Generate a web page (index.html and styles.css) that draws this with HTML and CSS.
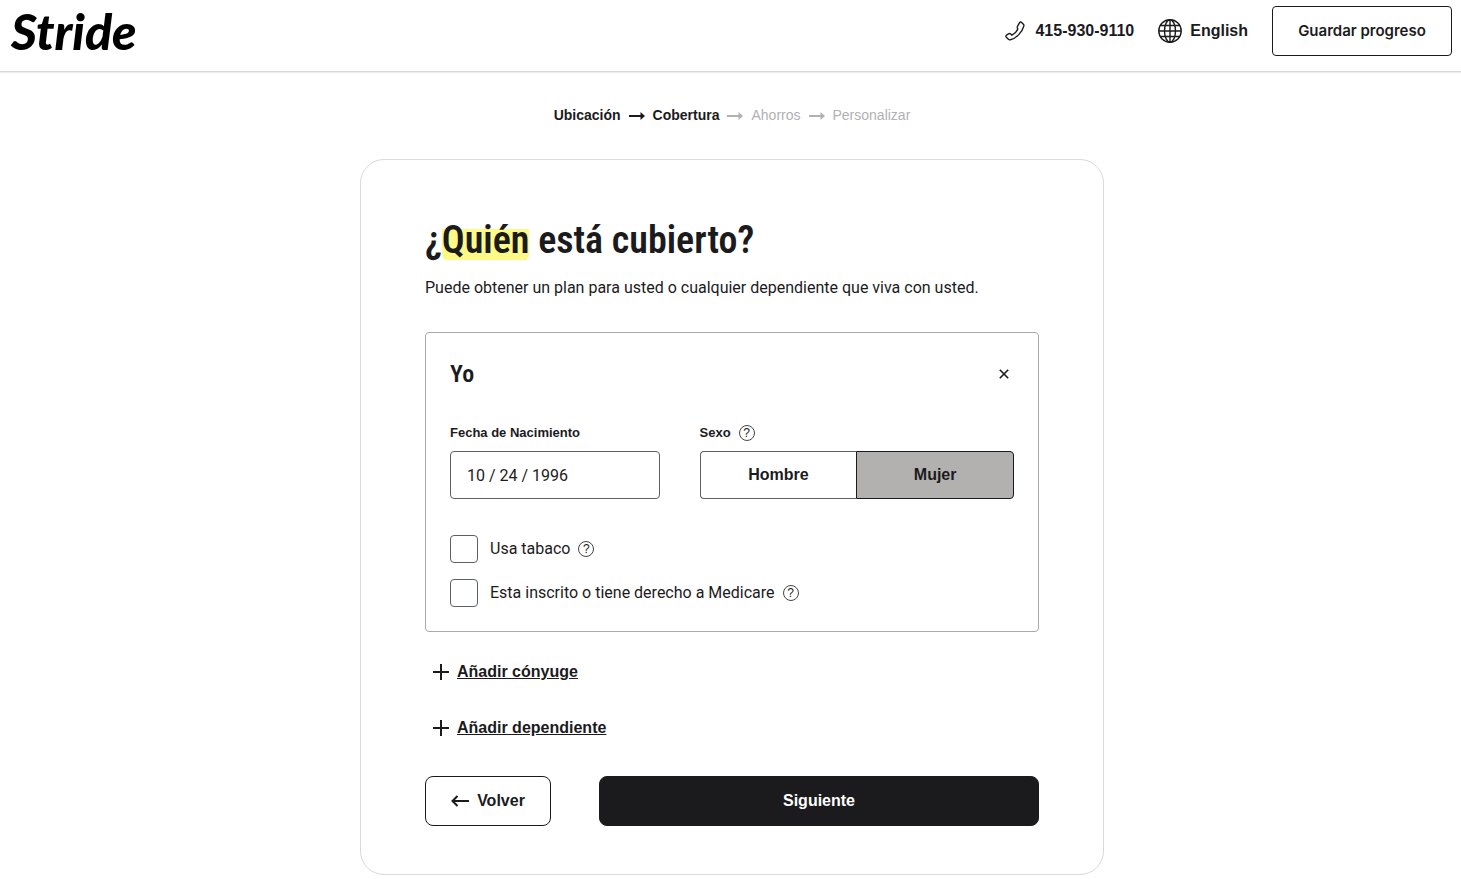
FILE: index.html
```html
<!DOCTYPE html>
<html lang="es">
<head>
<meta charset="utf-8">
<title>Stride</title>
<link rel="stylesheet" href="styles.css">
</head>
<body>

<header class="topbar">
  <a class="logo" href="#">Stride</a>
  <nav class="topbar-nav">
    <a class="nav-link phone" href="tel:4159309110">
      <svg width="20" height="20" viewBox="0 0 20 20" fill="none" stroke="#1b1b1d" stroke-width="1.4" stroke-linejoin="round">
        <path d="M12.600 5.200 14.600 1.700c.5-.8 1.400-.9 2-.3l1.800 1.800c.5.5.6 1.200.4 1.900C17.300 11 11.300 17.400 5.400 18.800c-.8.2-1.500 0-2-.5L1.300 16.200c-.6-.6-.5-1.500.2-2l2.400-1.500c.6-.4 1.300-.3 1.800.2l1.300 1.300c2.600-1.300 4.700-3.500 5.800-6.200l-.5-1.300c-.1-.5 0-1 .3-1.500z"/>
      </svg>
      415-930-9110
    </a>
    <a class="nav-link language" href="#">
      <svg width="24" height="24" viewBox="0 0 24 24" fill="none" stroke="#1b1b1d" stroke-width="1.4">
        <circle cx="12" cy="12" r="11.200"/>
        <ellipse cx="12" cy="12" rx="5.500" ry="11.200"/>
        <path d="M12 .8v22.400M.8 12h22.400M2.500 6.500h19M2.500 17.500h19"/>
      </svg>
      English
    </a>
    <button class="button save" type="button">Guardar progreso</button>
  </nav>
</header>

<main>
  <ol class="steps">
    <li>Ubicación</li>
    <li class="current"><svg class="step-arrow" width="16" height="8" viewBox="0 0 16 8"><path d="M0 3h11.500V0L16 4l-4.500 4V5H0z"/></svg>Cobertura</li>
    <li class="pending"><svg class="step-arrow" width="16" height="8" viewBox="0 0 16 8"><path d="M0 3h11.500V0L16 4l-4.500 4V5H0z"/></svg>Ahorros</li>
    <li class="pending"><svg class="step-arrow" width="16" height="8" viewBox="0 0 16 8"><path d="M0 3h11.500V0L16 4l-4.500 4V5H0z"/></svg>Personalizar</li>
  </ol>

  <form class="card">
    <h1>¿<span class="highlight">Quién</span> está cubierto?</h1>
    <p class="intro">Puede obtener un plan para usted o cualquier dependiente que viva con usted.</p>

    <section class="person">
      <div class="person-head">
        <h2>Yo</h2>
        <button class="close" type="button" aria-label="Quitar">
          <svg width="10" height="10" viewBox="0 0 10 10" stroke="#1b1b1d" stroke-width="1.6"><path d="M.8.8l8.400 8.400M9.200.8L.8 9.200"/></svg>
        </button>
      </div>

      <div class="fields">
        <div class="field">
          <label class="field-label" for="birth">Fecha de Nacimiento</label>
          <input class="text-input" id="birth" type="text" value="10 / 24 / 1996">
        </div>
        <div class="field">
          <div class="field-label">Sexo <button class="help" type="button">?</button></div>
          <div class="toggle">
            <button class="option" type="button">Hombre</button>
            <button class="option selected" type="button">Mujer</button>
          </div>
        </div>
      </div>

      <div class="check">
        <input type="checkbox" id="tobacco">
        <label for="tobacco">Usa tabaco</label>
        <button class="help" type="button">?</button>
      </div>
      <div class="check">
        <input type="checkbox" id="medicare">
        <label for="medicare">Esta inscrito o tiene derecho a Medicare</label>
        <button class="help" type="button">?</button>
      </div>
    </section>

    <a class="add" href="#">
      <svg width="16" height="16" viewBox="0 0 16 16" stroke="#1b1b1d" stroke-width="2"><path d="M8 0v16M0 8h16"/></svg>
      <span>Añadir cónyuge</span>
    </a>
    <a class="add" href="#">
      <svg width="16" height="16" viewBox="0 0 16 16" stroke="#1b1b1d" stroke-width="2"><path d="M8 0v16M0 8h16"/></svg>
      <span>Añadir dependiente</span>
    </a>

    <div class="actions">
      <button class="button back" type="button">
        <svg width="18" height="12" viewBox="0 0 18 12" fill="none" stroke="#1b1b1d" stroke-width="2"><path d="M18 6H2M6.500 1L1.500 6l5 5"/></svg>
        Volver
      </button>
      <button class="button next" type="submit">Siguiente</button>
    </div>
  </form>
</main>

</body>
</html>
```
FILE: styles.css
```css
* {
  box-sizing: border-box;
}

body {
  margin: 0;
  font-family: "Liberation Sans", Arial, sans-serif;
  font-size: 16px;
  line-height: 24px;
  color: #1b1b1d;
  background-color: #fff;
}

button,
input {
  font: inherit;
  color: inherit;
}

button {
  padding: 0;
  cursor: pointer;
}

a {
  color: inherit;
}

svg {
  flex: none;
}

.topbar {
  display: flex;
  justify-content: space-between;
  padding: 6px 9px 15px 11px;
  border-bottom: 1px solid #d8d8d8;
  box-shadow: 0 1px 1px #eee;
}

.logo {
  font-family: Lato, sans-serif;
  font-size: 50px;
  line-height: 50px;
  font-weight: 900;
  font-style: italic;
  color: #000;
  text-decoration: none;
}

.topbar-nav {
  display: flex;
  align-items: center;
  gap: 24px;
}

.nav-link {
  display: flex;
  align-items: center;
  gap: 8px;
  font-weight: 700;
  text-decoration: none;
}

.phone {
  gap: 10px;
}

.button {
  height: 50px;
  border: 1px solid #1b1b1d;
  border-radius: 8px;
  background-color: #fff;
  font-weight: 700;
}

.save {
  width: 180px;
  border-radius: 4px;
  font-family: Inter, sans-serif;
  font-size: 15px;
  font-weight: 600;
}

main {
  padding: 32px 0 4px 3px;
}

.steps {
  display: flex;
  justify-content: center;
  gap: 8px;
  margin: 0 0 32px;
  padding: 0;
  list-style: none;
  font-size: 14px;
  line-height: 23px;
  font-weight: 700;
}

.steps li {
  display: flex;
  align-items: center;
  gap: 8px;
}

.step-arrow {
  fill: currentColor;
}

.steps .pending {
  color: #b1b1b4;
  font-weight: 400;
}

.card {
  max-width: 744px;
  margin: 0 auto;
  padding: 48px 64px;
  border: 1px solid #d9d9de;
  border-radius: 24px;
}

h1 {
  margin: 0;
  font-family: "Roboto Condensed", Roboto, sans-serif;
  font-size: 38px;
  line-height: 64px;
  font-weight: 600;
}

.highlight {
  background: linear-gradient(#fffa85, #fffa85) 0 11px / 100% 31px no-repeat;
  border-radius: 8px;
}

.intro {
  margin: 4px 0 32px;
}

.intro,
.check label,
.text-input {
  font-family: Roboto, sans-serif;
}

.person {
  padding: 24px;
  border: 1px solid #a9a9ad;
  border-radius: 4px;
}

.person-head {
  display: flex;
  align-items: center;
  justify-content: space-between;
  margin-bottom: 32px;
}

h2 {
  margin: 0;
  font-family: "Roboto Condensed", Roboto, sans-serif;
  font-size: 24px;
  line-height: 34px;
  font-weight: 600;
}

.close {
  display: flex;
  align-items: center;
  justify-content: center;
  width: 20px;
  height: 32px;
  border: none;
  background: none;
}

.fields {
  display: grid;
  grid-template-columns: 2fr 3fr;
  gap: 40px;
  margin-bottom: 36px;
}

.field-label {
  display: flex;
  align-items: center;
  gap: 8px;
  height: 20px;
  margin-bottom: 8px;
  font-size: 13px;
  font-weight: 600;
}

.text-input {
  width: 100%;
  height: 48px;
  padding: 0 16px;
  border: 1px solid #5c606b;
  border-radius: 4px;
}

.help {
  width: 16px;
  height: 16px;
  border: 1px solid #444;
  border-radius: 50%;
  background: none;
  font-size: 12px;
  line-height: 14px;
  font-weight: 400;
}

.toggle {
  display: flex;
}

.option {
  flex: 1;
  height: 48px;
  border: 1px solid #5c606b;
  border-right: none;
  border-radius: 4px 0 0 4px;
  background-color: #fff;
  font-weight: 700;
}

.option.selected {
  border: 1px solid #1b1b1d;
  border-radius: 0 4px 4px 0;
  background-color: #b3b1b0;
}

.check {
  display: flex;
  align-items: center;
  gap: 8px;
}

.check + .check {
  margin-top: 16px;
}

.check input {
  appearance: none;
  width: 28px;
  height: 28px;
  margin: 0 4px 0 0;
  border: 1px solid #5c606b;
  border-radius: 4px;
}

.add {
  display: flex;
  align-items: center;
  gap: 8px;
  width: fit-content;
  margin: 28px 0 32px;
  padding-left: 8px;
  font-weight: 700;
  text-decoration: none;
}

.add span {
  text-decoration: underline;
}

.actions {
  display: flex;
  gap: 48px;
  margin-top: 36px;
}

.back {
  display: flex;
  align-items: center;
  justify-content: center;
  gap: 8px;
  width: 126px;
}

.next {
  flex: 1;
  background-color: #1b1b1d;
  color: #fff;
}
```
